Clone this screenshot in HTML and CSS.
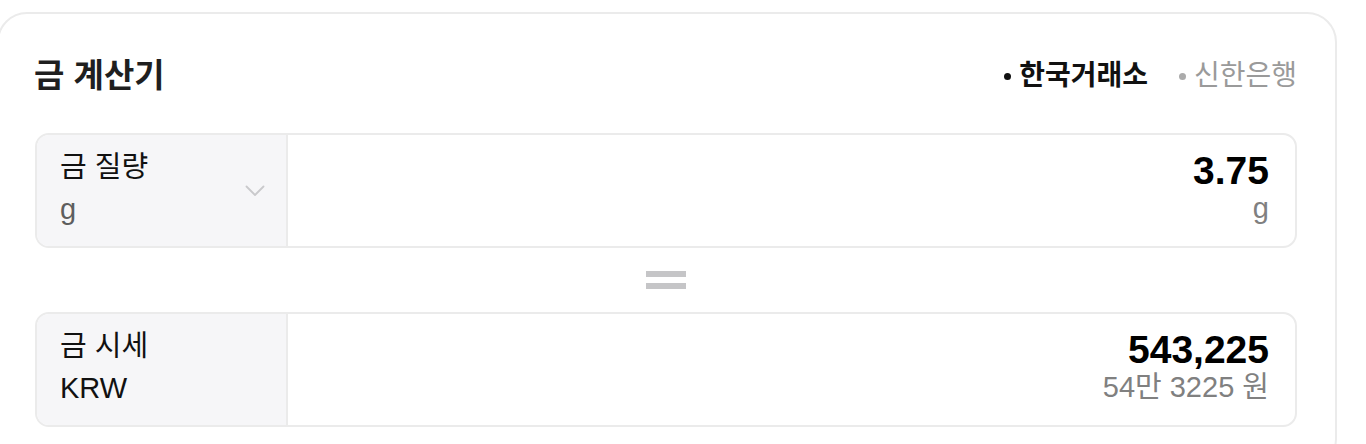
FILE: index.html
```html
<!DOCTYPE html>
<html lang="ko">
<head>
<meta charset="utf-8">
<title>금 계산기</title>
<link rel="stylesheet" href="styles.css">
</head>
<body>
<section class="card">
  <header class="card-header">
    <h2 class="title">금 계산기</h2>
    <div class="sources">
      <span class="source active">한국거래소</span>
      <span class="source">신한은행</span>
    </div>
  </header>

  <div class="field">
    <div class="unit-select">
      <div class="unit-text">
        <div class="unit-name">금 질량</div>
        <div class="unit-code muted">g</div>
      </div>
      <svg class="chevron" width="20" height="12" viewBox="0 0 20 12" aria-hidden="true">
        <polyline points="1.5,1.5 10,10 18.5,1.5" fill="none" stroke="#c9c9cc" stroke-width="1.8" stroke-linecap="round" stroke-linejoin="round"/>
      </svg>
    </div>
    <div class="amount">
      <div class="amount-value">3.75</div>
      <div class="amount-sub">g</div>
    </div>
  </div>

  <div class="equals" aria-hidden="true">
    <span class="bar"></span>
    <span class="bar"></span>
  </div>

  <div class="field">
    <div class="unit-select">
      <div class="unit-text">
        <div class="unit-name">금 시세</div>
        <div class="unit-code">KRW</div>
      </div>
    </div>
    <div class="amount">
      <div class="amount-value">543,225</div>
      <div class="amount-sub">54만 3225 원</div>
    </div>
  </div>
</section>
</body>
</html>
```

FILE: styles.css
```css
* {
  box-sizing: border-box;
}

html, body {
  margin: 0;
  padding: 0;
  background: #ffffff;
}

body {
  font-family: "Liberation Sans", "Noto Sans CJK KR", sans-serif;
  color: #111111;
  overflow: hidden;
}

.card {
  margin: 12px 0 0 -3px;
  width: 1340px;
  border: 2px solid #ebebeb;
  border-radius: 30px;
  padding: 0 38px 40px 36px;
  background: #ffffff;
}

.card-header {
  display: flex;
  align-items: center;
  justify-content: space-between;
  box-sizing: content-box;
  height: 44px;
  padding-top: 40px;
  margin-bottom: 35px;
}

.title {
  margin: 0 0 0 -1px;
  font-size: 33px;
  font-weight: 700;
  line-height: 44px;
  color: #1f1f1f;
}

.sources {
  display: flex;
  align-items: center;
  gap: 31px;
}

.source {
  display: flex;
  align-items: center;
  gap: 8px;
  font-size: 28px;
  line-height: 44px;
  color: #9a9a9a;
}

.source::before {
  content: "";
  width: 7px;
  height: 7px;
  border-radius: 50%;
  background: #ababab;
}

.source.active {
  color: #111111;
  font-weight: 700;
}

.source.active::before {
  background: #111111;
}

.field {
  display: flex;
  height: 115px;
  border: 2px solid #ebebeb;
  border-radius: 14px;
  overflow: hidden;
}

.unit-select {
  width: 251px;
  flex: none;
  display: flex;
  align-items: center;
  justify-content: space-between;
  padding: 0 21px 0 23px;
  background: #f6f6f8;
  border-right: 2px solid #ebebeb;
}

.unit-text {
  display: flex;
  flex-direction: column;
}

.unit-name {
  font-size: 29px;
  line-height: 37px;
  color: #111111;
}

.unit-code {
  font-size: 29px;
  line-height: 47px;
  color: #111111;
}

.unit-code.muted {
  color: #5e5e5e;
}

.chevron {
  display: block;
  flex: none;
}

.amount {
  flex: 1;
  display: flex;
  flex-direction: column;
  align-items: flex-end;
  justify-content: center;
  padding-right: 26px;
}

.amount-value {
  font-size: 39px;
  font-weight: 700;
  line-height: 34px;
  color: #000000;
}

.amount-sub {
  font-size: 29px;
  line-height: 40px;
  color: #808080;
}

.equals {
  display: flex;
  flex-direction: column;
  align-items: center;
  gap: 6px;
  padding: 23px 0;
}

.bar {
  display: block;
  width: 40px;
  height: 6px;
  background: #c5c5c7;
}
```
